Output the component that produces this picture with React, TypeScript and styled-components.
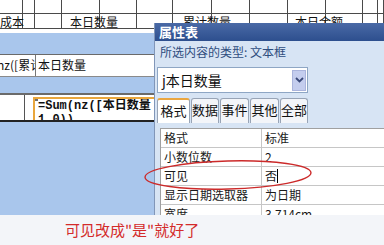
import styled, { createGlobalStyle } from 'styled-components';

const GlobalStyle = createGlobalStyle`
  body {
    margin: 0;
    font-family: 'Noto Sans CJK SC', 'Noto Sans', sans-serif;
  }
`;

const Screen = styled.div`
  position: relative;
  width: 384px;
  height: 245px;
  overflow: hidden;
  display: flex;
  flex-direction: column;
`;

const Canvas = styled.div`
  height: 215px;
  display: flex;
  flex-direction: column;
  background: #a9c6ec;
`;

const HeaderGrid = styled.div`
  display: grid;
  grid-template-columns: 23px 12px 27px 38px 37px 36px 39px 38px 38px 38px 37px 15px 1fr;
  grid-template-rows: 14px 15px;
  height: 33px;
  background: #fff;
`;

const HeadCell = styled.div<{ $pad?: number; $right?: boolean }>`
  border-right: 1px solid #4a4a4a;
  border-bottom: 1px solid #4a4a4a;
  font-size: 12px;
  line-height: 15px;
  color: #111;
  white-space: nowrap;
  overflow: visible;
  padding-left: ${(p) => p.$pad ?? 0}px;
  text-align: ${(p) => (p.$right ? 'right' : 'left')};
`;

const Band = styled.div<{ $h: number }>`
  height: ${(p) => p.$h}px;
  flex: ${(p) => (p.$h ? 'none' : '1')};
`;

const FieldRow = styled.div`
  height: 23px;
  box-sizing: border-box;
  display: grid;
  grid-template-columns: 36px 1fr;
  background: #fff;
  border-top: 1px solid #6a6a6a;
  border-bottom: 1px solid #8a8a8a;
`;

const FieldCell = styled.div<{ $shift?: number }>`
  font-size: 12px;
  line-height: 20px;
  color: #111;
  white-space: nowrap;
  overflow: hidden;
  border-right: 1px solid #777;
  padding-left: 2px;
  text-indent: ${(p) => p.$shift ?? 0}px;
`;

const SumSection = styled.div`
  height: 29px;
  box-sizing: border-box;
  display: flex;
  background: #fff;
  border-top: 2px solid #6a6a6a;
  border-bottom: 2px solid #222;
`;

const SideCell = styled.div`
  width: 24px;
  border-right: 1px solid #555;
`;

const SumBox = styled.div`
  position: relative;
  margin: 2px 0 0 8px;
  width: 130px;
  box-sizing: border-box;
  border: 2px solid #e9a63c;
  border-bottom: 0;
  padding: 0 0 0 3px;
  font-family: 'Liberation Mono', 'Noto Sans CJK SC', monospace;
  font-weight: bold;
  font-size: 12px;
  line-height: 14px;
  color: #111;
  white-space: pre;
  overflow: hidden;

  &::before {
    content: '';
    position: absolute;
    left: -2px;
    top: -2px;
    width: 5px;
    height: 4px;
    background: #6f6f6f;
  }
`;

const Caption = styled.div`
  flex: 1;
  background: #f3f5f9;
  padding-left: 65px;
  font-size: 15px;
  line-height: 30px;
  color: #d42b2b;
`;

const Panel = styled.div`
  position: absolute;
  left: 154px;
  top: 23px;
  width: 232px;
  height: 192px;
  box-sizing: border-box;
  background: #d7e4f4;
  border-left: 1px solid #8196b8;
  display: flex;
  flex-direction: column;
`;

const TitleBar = styled.div`
  height: 18px;
  padding-left: 4px;
  background: linear-gradient(#4a6aa6, #2d4f8e);
  color: #fff;
  font-size: 13px;
  font-weight: bold;
  line-height: 18px;
`;

const TypeLabel = styled.div`
  height: 24px;
  padding-left: 5px;
  font-size: 12px;
  line-height: 22px;
  color: #2f4d7e;
`;

const Combo = styled.div`
  margin: 2px 0 0 2px;
  width: 151px;
  height: 26px;
  box-sizing: border-box;
  background: #fff;
  border: 1px solid #8ea6c4;
  display: flex;
  align-items: center;
  justify-content: space-between;
  padding: 0 1px 0 4px;
  font-size: 14px;
  color: #111;
`;

const DropButton = styled.div`
  width: 14px;
  height: 21px;
  background: #c4cdee;
  border: 1px solid #aab4dc;
  box-sizing: border-box;
  display: flex;
  align-items: center;
  justify-content: center;
`;

const TabStrip = styled.div`
  margin: 5px 0 0 2px;
  height: 25px;
  display: flex;
  gap: 1px;
`;

const Tab = styled.div<{ $w: number; $active?: boolean }>`
  width: ${(p) => p.$w}px;
  box-sizing: border-box;
  border: 1px solid #98a4b6;
  border-top: ${(p) => (p.$active ? '2px solid #eaa640' : '1px solid #98a4b6')};
  border-bottom: 0;
  border-radius: 3px 3px 0 0;
  background: ${(p) => (p.$active ? '#fff' : '#f3f5f9')};
  font-size: 13px;
  line-height: 22px;
  text-align: center;
  color: #111;
`;

const PropGrid = styled.div`
  margin: 5px 0 0 5px;
  flex: 1;
  background: #fff;
  border-top: 1px solid #a0a0a0;
  border-left: 1px solid #a0a0a0;
  overflow: hidden;
`;

const PropRow = styled.div`
  display: grid;
  grid-template-columns: 101px 1fr;
  height: 19px;
  box-sizing: border-box;
  border-bottom: 1px solid #c6c6c6;
  font-size: 12px;
  line-height: 18px;
  color: #1a1a1a;
`;

const PropName = styled.div`
  padding-left: 3px;
  border-right: 1px solid #c6c6c6;
  white-space: nowrap;
`;

const PropValue = styled.div`
  padding-left: 3px;
  display: flex;
  align-items: center;
`;

const Caret = styled.span`
  display: inline-block;
  width: 1px;
  height: 14px;
  background: #000;
`;

const Mark = styled.svg`
  position: absolute;
  left: 140px;
  top: 158px;
  pointer-events: none;
`;

const headerCols = 13;

const rowLabels: Record<number, { text: string; pad?: number; right?: boolean }> = {
  0: { text: '成本', right: true },
  3: { text: '本日数量', pad: 8 },
  6: { text: '累计数量', pad: 10 },
  9: { text: '本日金额', pad: 7 },
};

const props = [
  { name: '格式', value: '标准' },
  { name: '小数位数', value: '2' },
  { name: '可见', value: '否', caret: true },
  { name: '显示日期选取器', value: '为日期' },
  { name: '宽度', value: '3.714cm' },
];

const tabs = [
  { label: '格式', w: 33, active: true },
  { label: '数据', w: 28 },
  { label: '事件', w: 29 },
  { label: '其他', w: 29 },
  { label: '全部', w: 28 },
];

export default function App() {
  return (
    <Screen>
      <GlobalStyle />
      <Canvas>
        <HeaderGrid>
          {Array.from({ length: headerCols }).map((_, i) => (
            <HeadCell key={'a' + i} />
          ))}
          {Array.from({ length: headerCols }).map((_, i) => {
            const l = rowLabels[i];
            return (
              <HeadCell key={'b' + i} $pad={l?.pad} $right={l?.right}>
                {l?.text}
              </HeadCell>
            );
          })}
        </HeaderGrid>
        <Band $h={21} />
        <FieldRow>
          <FieldCell $shift={-5}>nz([累计数量</FieldCell>
          <FieldCell>本日数量</FieldCell>
        </FieldRow>
        <Band $h={16} />
        <SumSection>
          <SideCell />
          <SumBox>{'=Sum(nz([本日数量\n1,0))'}</SumBox>
        </SumSection>
        <Band $h={0} />
      </Canvas>
      <Caption>可见改成"是"就好了</Caption>

      <Panel>
        <TitleBar>属性表</TitleBar>
        <TypeLabel>所选内容的类型: 文本框</TypeLabel>
        <Combo>
          <span>j本日数量</span>
          <DropButton>
            <svg width='9' height='6' viewBox='0 0 9 6'>
              <path d='M1 1 L4.5 4.5 L8 1' fill='none' stroke='#3b4a7a' strokeWidth='1.8' />
            </svg>
          </DropButton>
        </Combo>
        <TabStrip>
          {tabs.map((t) => (
            <Tab key={t.label} $w={t.w} $active={t.active}>
              {t.label}
            </Tab>
          ))}
        </TabStrip>
        <PropGrid>
          {props.map((p) => (
            <PropRow key={p.name}>
              <PropName>{p.name}</PropName>
              <PropValue>
                {p.value}
                {p.caret && <Caret />}
              </PropValue>
            </PropRow>
          ))}
        </PropGrid>
      </Panel>

      <Mark width='180' height='36' viewBox='0 0 180 36'>
        <ellipse
          cx='88'
          cy='17'
          rx='83'
          ry='14'
          fill='none'
          stroke='#cc2a2a'
          strokeWidth='1.4'
          transform='rotate(-1.5 88 17)'
        />
      </Mark>
    </Screen>
  );
}
